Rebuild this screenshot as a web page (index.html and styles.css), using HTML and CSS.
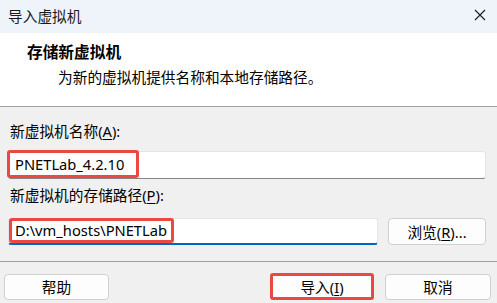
FILE: index.html
```html
<!DOCTYPE html>
<html lang="zh-CN">
<head>
<meta charset="utf-8">
<title>导入虚拟机</title>
<link rel="stylesheet" href="styles.css">
</head>
<body>
<div class="dialog">
  <div class="titlebar">
    <span class="title">导入虚拟机</span>
    <svg class="close" width="12" height="12" viewBox="0 0 12 12"><path d="M1 1L11 11M11 1L1 11" stroke="#1a1a1a" stroke-width="1.1" fill="none"/></svg>
  </div>
  <div class="header">
    <div class="heading">存储新虚拟机</div>
    <div class="subtitle">为新的虚拟机提供名称和本地存储路径。</div>
  </div>
  <div class="rule"></div>
  <div class="body">
    <div class="label">新虚拟机名称(<u>A</u>):</div>
    <div class="field name-field">
      <span class="value">PNETLab_4.2.10</span>
      <span class="mark mark-name"></span>
    </div>
    <div class="label label2">新虚拟机的存储路径(<u>P</u>):</div>
    <div class="path-row">
      <div class="field path-field">
        <span class="value">D:\vm_hosts\PNETLab</span>
        <span class="mark mark-path"></span>
      </div>
      <div class="btn browse">浏览(<u>R</u>)...</div>
    </div>
  </div>
  <div class="rule rule2"></div>
  <div class="footer">
    <div class="btn help">帮助</div>
    <div class="spacer"></div>
    <div class="btn import">导入(<u>I</u>)<span class="mark mark-import"></span></div>
    <div class="btn cancel">取消</div>
  </div>
</div>
</body>
</html>
```

FILE: styles.css
```css
html, body {
  margin: 0;
  padding: 0;
}
body {
  width: 497px;
  height: 303px;
  overflow: hidden;
  background: #f0f0f0;
  font-family: "Noto Sans", "Noto Sans CJK SC", sans-serif;
  font-size: 14.7px;
  color: #000;
}
.dialog {
  display: flex;
  flex-direction: column;
  height: 303px;
}
.titlebar {
  height: 33px;
  background: #eff3fa;
  display: flex;
  align-items: center;
  justify-content: space-between;
  padding: 0 11px 0 8px;
}
.title {
  line-height: 20px;
  margin-top: -2px;
  color: #1a1a1a;
}
.close {
  display: block;
  margin-top: -3px;
}
.header {
  height: 73px;
  background: #fff;
  box-sizing: border-box;
  padding-top: 9px;
}
.heading {
  font-weight: bold;
  font-size: 15.7px;
  line-height: 20px;
  padding-left: 27px;
}
.subtitle {
  line-height: 20px;
  margin-top: 5px;
  padding-left: 58px;
}
.rule {
  height: 1px;
  background: #a0a0a0;
}
.body {
  padding: 14px 11px 0 8px;
  height: 154px;
  box-sizing: border-box;
}
.label {
  line-height: 20px;
  padding-left: 2px;
}
.label2 {
  margin-top: 6px;
}
.field {
  position: relative;
  background: #fff;
  border: 1px solid #e5e5e5;
  border-bottom: 1px solid #868686;
  border-radius: 3px;
  box-sizing: border-box;
  display: flex;
  align-items: center;
  padding-left: 6px;
}
.name-field {
  margin-top: 10px;
  height: 28px;
  width: 478px;
}
.path-row {
  display: flex;
  gap: 10px;
  margin-top: 13px;
}
.path-field {
  width: 370px;
  height: 27px;
  border-bottom: 2px solid #0067c0;
}
.value {
  line-height: 20px;
  margin-top: -2px;
}
.mark {
  position: absolute;
  border: 3px solid #ea4840;
  border-radius: 3px;
  box-sizing: border-box;
  pointer-events: none;
}
.mark-name {
  left: -2px;
  top: -2px;
  width: 132px;
  height: 28px;
}
.mark-path {
  left: 0px;
  top: -1px;
  width: 165px;
  height: 25px;
}
.btn {
  position: relative;
  background: #fdfdfd;
  border: 1px solid #d0d0d0;
  border-radius: 4px;
  box-sizing: border-box;
  display: flex;
  align-items: center;
  justify-content: center;
  line-height: 20px;
}
.browse {
  width: 98px;
  height: 27px;
}
.footer {
  display: flex;
  padding: 12px 6px 0 4px;
}
.footer .btn {
  height: 26px;
}
.help {
  width: 105px;
}
.spacer {
  flex: 1;
}
.import {
  width: 104px;
  border-color: #0067c0;
}
.cancel {
  width: 106px;
  margin-left: 11px;
}
.mark-import {
  left: -1px;
  top: -2px;
  right: -1px;
  bottom: -1px;
}
u {
  text-decoration-thickness: 1px;
  text-underline-offset: 2px;
}
```
